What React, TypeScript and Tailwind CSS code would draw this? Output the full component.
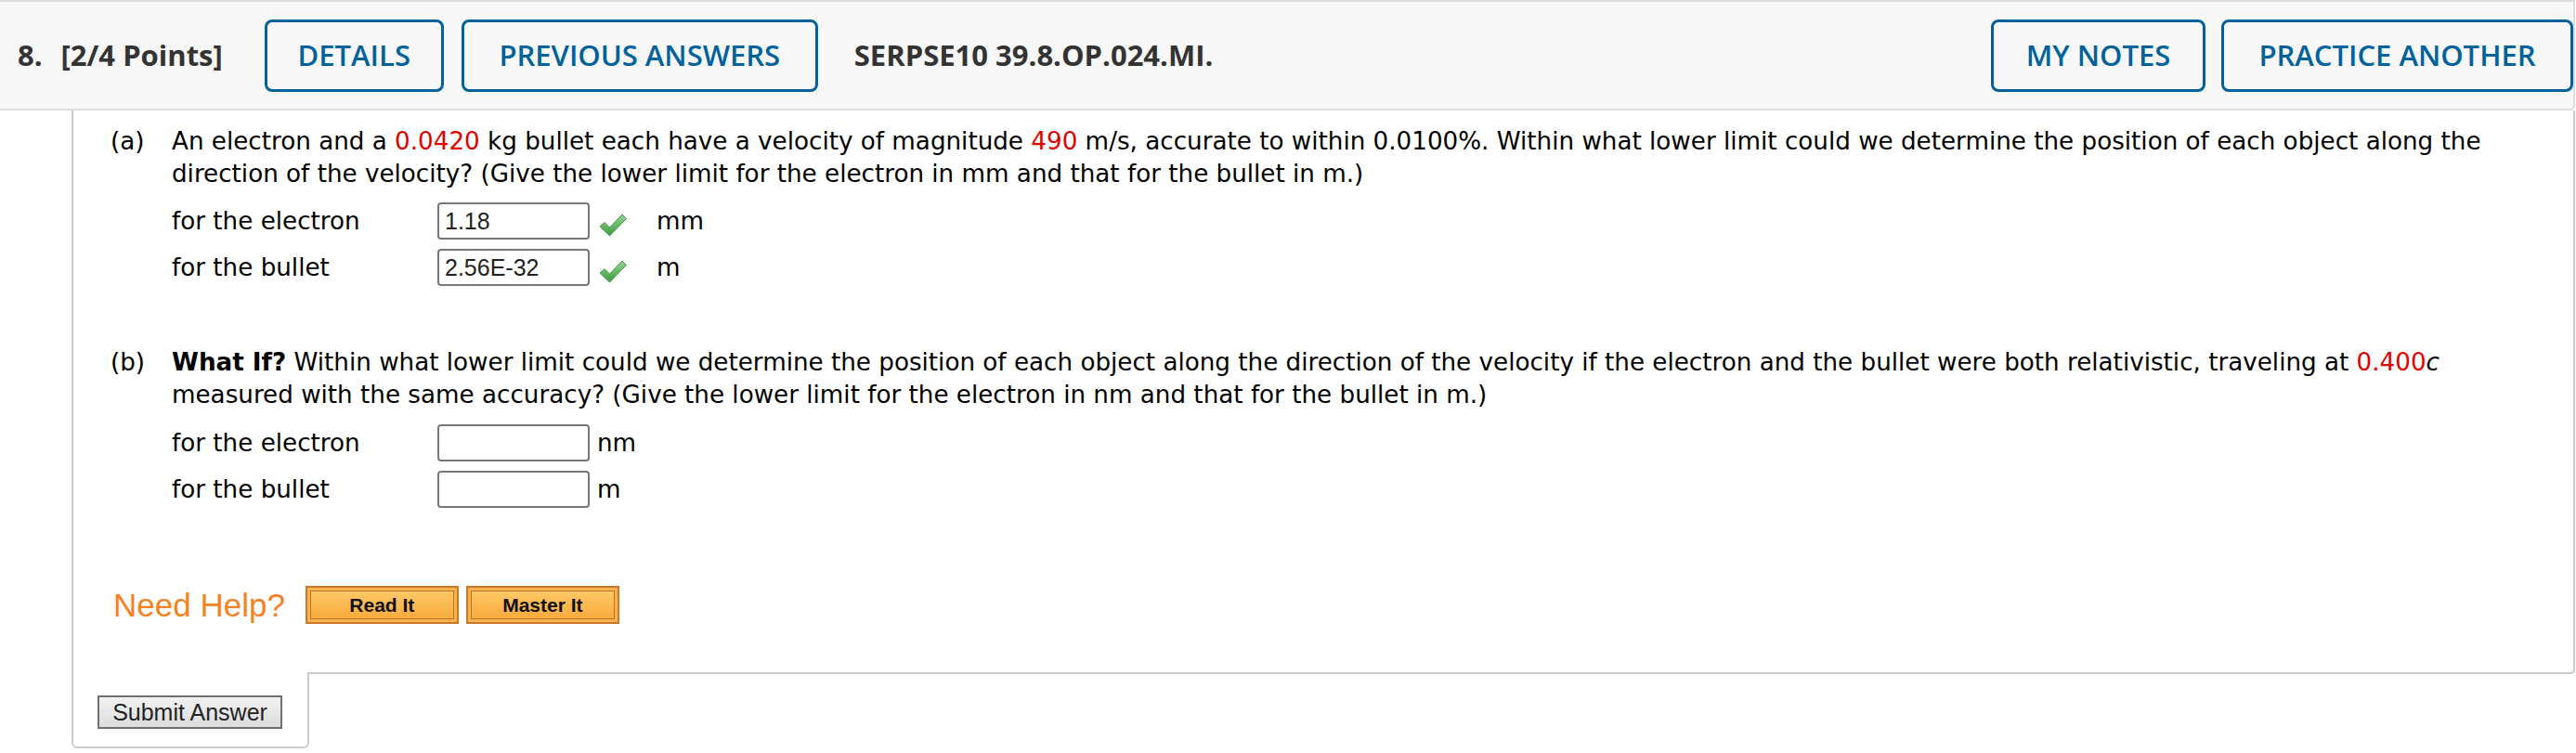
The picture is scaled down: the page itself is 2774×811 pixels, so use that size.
import React from 'react'

const body = "font-['DejaVu_Sans',Verdana,sans-serif]"

function Check() {
  return (
    <svg width="30" height="25" viewBox="0 0 30 25" className="ml-[10px] mt-[8px] shrink-0">
      <defs>
        <linearGradient id="chk" x1="0" y1="0" x2="0" y2="1">
          <stop offset="0" stopColor="#8fd68f" />
          <stop offset="1" stopColor="#3f9a3f" />
        </linearGradient>
      </defs>
      <polygon
        points="1,14 6,9.5 11.5,15 25,1 29.5,5.5 11.5,24"
        fill="url(#chk)"
        stroke="#4a9a4a"
        strokeWidth="1"
        strokeLinejoin="round"
      />
    </svg>
  )
}

function HeaderButton({ label, width, className = '' }: { label: string; width: string; className?: string }) {
  return (
    <button
      className={`${width} ${className} h-[78px] shrink-0 rounded-[8px] border-[3px] border-[#00629b] text-center text-[31px] font-semibold text-[#00629b]`}
    >
      {label}
    </button>
  )
}

function AnswerRow({ label, value, unit, correct }: { label: string; value: string; unit: string; correct?: boolean }) {
  return (
    <div className="flex h-[40px] items-center">
      <div className="w-[286px] shrink-0">{label}</div>
      <div className="flex h-[40px] w-[164px] shrink-0 items-center rounded-[4px] border-2 border-[#777] px-[6px] font-['Liberation_Sans',Arial,sans-serif] text-[25px] text-[#222]">
        {value}
      </div>
      {correct ? (
        <>
          <Check />
          <span className="ml-[32px]">{unit}</span>
        </>
      ) : (
        <span className="ml-[8px]">{unit}</span>
      )}
    </div>
  )
}

function HelpButton({ label }: { label: string }) {
  return (
    <div className="h-[41px] w-[165px] border-2 border-[#c9772b] bg-[#fbb24a] p-[3px]">
      <div className="flex h-full w-full items-center justify-center border border-[#b8742f] bg-gradient-to-b from-[#ffc865] to-[#f9aa3c] font-['Liberation_Sans',Arial,sans-serif] text-[21px] font-bold text-[#111]">
        {label}
      </div>
    </div>
  )
}

export default function App() {
  return (
    <div className="h-[811px] w-[2774px] overflow-hidden bg-white">
      <div className="flex h-[119px] w-[2773px] items-center rounded-br-[5px] border-y-2 border-r-2 border-[#dddddd] bg-[#f7f7f7] pl-[19px] font-['Open_Sans',sans-serif] text-[#333]">
        <span className="text-[31px] font-bold">8.</span>
        <span className="ml-[20px] text-[31px] font-bold">[2/4 Points]</span>
        <HeaderButton label="DETAILS" width="w-[193px]" className="ml-[45px]" />
        <HeaderButton label="PREVIOUS ANSWERS" width="w-[384px]" className="ml-[19px]" />
        <span className="ml-[39px] text-[31px] font-bold">SERPSE10 39.8.OP.024.MI.</span>
        <HeaderButton label="MY NOTES" width="w-[231px]" className="ml-auto" />
        <HeaderButton label="PRACTICE ANOTHER" width="w-[379px]" className="ml-[17px]" />
      </div>

      <div className={`ml-[77px] w-[2696px] ${body} text-[26.2px] leading-[35px] text-black`}>
        <div className="rounded-br-[5px] border-x-2 border-b-2 border-[#cccccc] pb-[52px] pl-[40px] pr-[30px] pt-[16px]">
          <div className="flex">
            <div className="w-[66px] shrink-0">(a)</div>
            <div className="flex-1">
              <p>
                An electron and a <span className="text-[#e00000]">0.0420</span> kg bullet each have a velocity of
                magnitude <span className="text-[#e00000]">490</span> m/s, accurate to within 0.0100%. Within what
                lower limit could we determine the position of each object along the direction of the velocity? (Give
                the lower limit for the electron in mm and that for the bullet in m.)
              </p>
              <div className="mt-[13px] flex flex-col gap-[10px]">
                <AnswerRow label="for the electron" value="1.18" unit="mm" correct />
                <AnswerRow label="for the bullet" value="2.56E-32" unit="m" correct />
              </div>
            </div>
          </div>

          <div className="mt-[65px] flex">
            <div className="w-[66px] shrink-0">(b)</div>
            <div className="flex-1">
              <p>
                <b>What If?</b> Within what lower limit could we determine the position of each object along the
                direction of the velocity if the electron and the bullet were both relativistic, traveling at{' '}
                <span className="text-[#e00000]">0.400</span>
                <i>c</i> measured with the same accuracy? (Give the lower limit for the electron in nm and that for
                the bullet in m.)
              </p>
              <div className="mt-[14px] flex flex-col gap-[10px]">
                <AnswerRow label="for the electron" value="" unit="nm" />
                <AnswerRow label="for the bullet" value="" unit="m" />
              </div>
            </div>
          </div>

          <div className="mt-[84px] flex items-center pl-[3px]">
            <span className="font-['Liberation_Sans',Arial,sans-serif] text-[35px] leading-none text-[#f5821f]">
              Need Help?
            </span>
            <div className="ml-[22px] flex gap-[8px]">
              <HelpButton label="Read It" />
              <HelpButton label="Master It" />
            </div>
          </div>
        </div>

        <div className="-mt-[2px] h-[82px] w-[256px] rounded-b-[6px] border-x-2 border-b-2 border-[#cccccc] bg-white pl-[26px] pt-[25px]">
          <button className="h-[36px] w-[199px] border-2 border-[#707070] bg-gradient-to-b from-[#f2f2f2] to-[#dcdcdc] font-['Liberation_Sans',Arial,sans-serif] text-[25px] leading-none text-[#222]">
            Submit Answer
          </button>
        </div>
      </div>
    </div>
  )
}
